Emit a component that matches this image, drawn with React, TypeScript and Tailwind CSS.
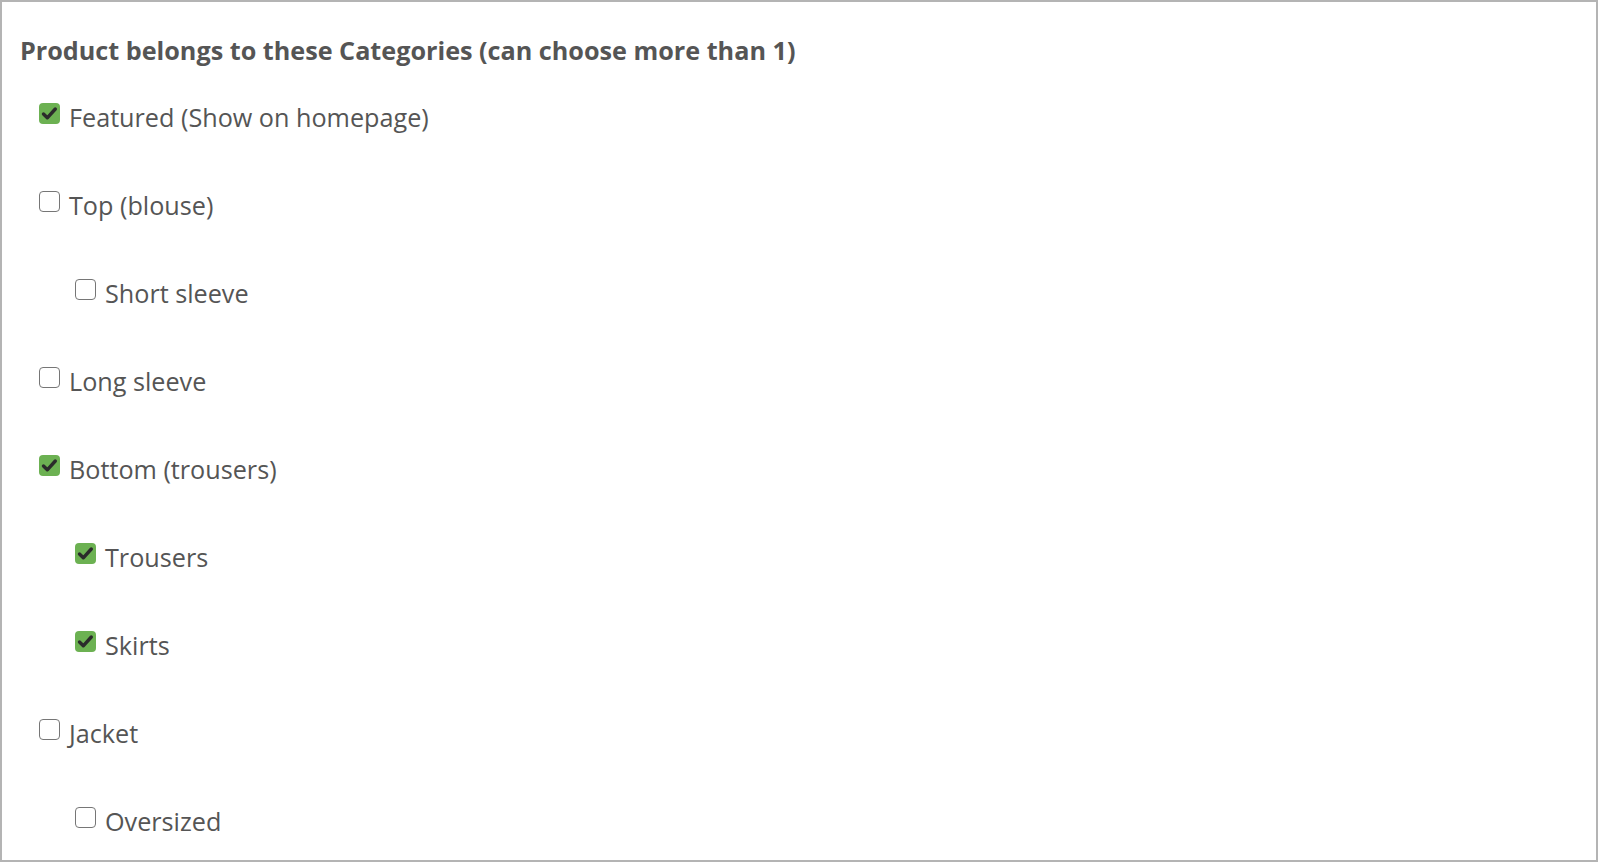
const categories = [
  { label: 'Featured (Show on homepage)', checked: true, nested: false },
  { label: 'Top (blouse)', checked: false, nested: false },
  { label: 'Short sleeve', checked: false, nested: true },
  { label: 'Long sleeve', checked: false, nested: false },
  { label: 'Bottom (trousers)', checked: true, nested: false },
  { label: 'Trousers', checked: true, nested: true },
  { label: 'Skirts', checked: true, nested: true },
  { label: 'Jacket', checked: false, nested: false },
  { label: 'Oversized', checked: false, nested: true },
]

function Box({ checked }: { checked: boolean }) {
  if (checked) {
    return (
      <span className="mt-[4px] flex h-[21px] w-[21px] shrink-0 items-center justify-center rounded-[4px] bg-[#6cb152]">
        <svg width="21" height="21" viewBox="0 0 21 21" fill="none">
          <path d="M4.5 11 L8.3 14.8 L16.3 6" stroke="#2b2b2b" strokeWidth="3.4" strokeLinecap="round" strokeLinejoin="round" />
        </svg>
      </span>
    )
  }
  return <span className="mt-[4px] block h-[21px] w-[21px] shrink-0 rounded-[4px] border-[1.5px] border-[#767676] bg-white" />
}

export default function App() {
  return (
    <div className="h-screen w-full overflow-hidden border-2 border-[#b4b4b4] bg-white font-['Open_Sans',sans-serif] text-[#555]">
      <div className="pl-[18px] pt-[30px]">
        <h2 className="text-[25.2px] font-bold leading-[36px]">Product belongs to these Categories (can choose more than 1)</h2>

        <div className="mt-[31px] flex flex-col gap-[52px] pl-[19px]">
          {categories.map((c) => (
            <label key={c.label} className={`flex items-start leading-[36px] ${c.nested ? 'pl-[36px]' : ''}`}>
              <Box checked={c.checked} />
              <span className="ml-[9px] text-[25.2px]">{c.label}</span>
            </label>
          ))}
        </div>
      </div>
    </div>
  )
}
